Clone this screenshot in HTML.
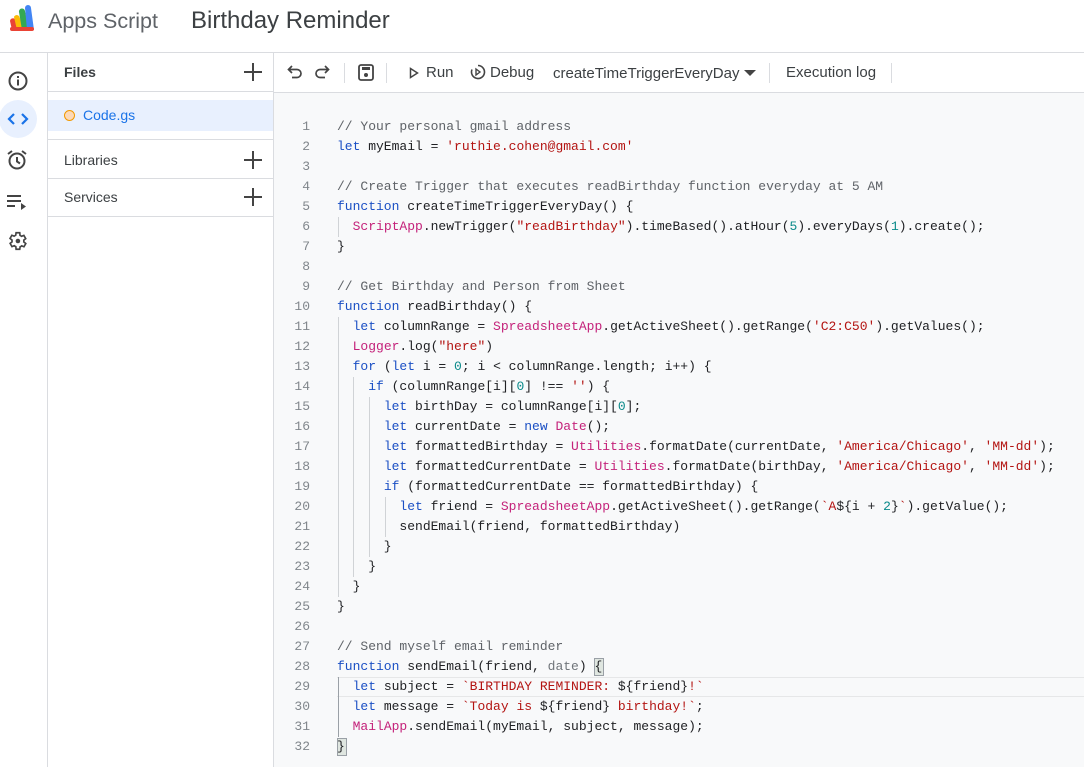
<!DOCTYPE html>
<html><head><meta charset="utf-8"><style>
*{margin:0;padding:0;box-sizing:border-box}
body{width:1084px;height:767px;overflow:hidden;background:#fff;font-family:"Liberation Sans",Arial,sans-serif;color:#202124;position:relative}
.a{position:absolute}
.hdr{left:0;top:0;width:1084px;height:53px;border-bottom:1px solid #dadce0}
.rail{left:0;top:53px;width:48px;height:714px;border-right:1px solid #dadce0}
.files{left:48px;top:53px;width:226px;height:714px;border-right:1px solid #dadce0}
.row{position:absolute;left:0;width:225px;font-size:14px;color:#3c4043;padding-left:16px}
.plus{position:absolute;right:11px;width:18px;height:18px}
.plus:before,.plus:after{content:"";position:absolute;background:#444}
.plus:before{left:0;top:8px;width:18px;height:2px}
.plus:after{left:8px;top:0;width:2px;height:18px}
.tb{left:274px;top:53px;width:810px;height:40px;border-bottom:1px solid #dadce0;font-size:15px;color:#3c4043}
.ed{left:274px;top:93px;width:810px;height:674px;background:#f8f9fa}
.code{left:337px;top:117px;font-family:"Liberation Mono",monospace;font-size:13px;line-height:20px;white-space:pre;color:#202124}
.ln{left:290px;top:117px;width:20px;text-align:right;font-family:"Liberation Mono",monospace;font-size:13px;line-height:20px;color:#80868b;white-space:pre}
.c{color:#5f6368}.k{color:#1a4fc4}.s{color:#b31412}.p{color:#c4227a}.n{color:#0b8a8a}.g{color:#70757a}
.gd{position:absolute;width:1px;background:#d0d3d6}
</style></head><body>
<div class="a hdr">
<svg class="a" style="left:9px;top:5px" width="34" height="28" viewBox="0 0 34 28">
<path d="M3 25 L1 16 a3 3 0 0 1 5-2 l6 11z" fill="#ea4335"/>
<path d="M8 25 L5 12 a3 3 0 0 1 5-1 l6 14z" fill="#fbbc04"/>
<path d="M13 25 L10 7 a3 3 0 0 1 6-1 l4 19z" fill="#34a853"/>
<path d="M18 25 L16 3 a3 3 0 0 1 6 0 l3 22z" fill="#4285f4"/>
<rect x="1" y="22" width="24" height="4" rx="2" fill="#ea4335"/>
</svg>
<div class="a" style="left:48px;top:9px;font-size:21.5px;color:#5f6368">Apps Script</div>
<div class="a" style="left:191px;top:7px;font-size:24px;color:#3c4043">Birthday Reminder</div>
</div>
<div class="a rail">
<svg class="a" style="left:7px;top:17px" width="22" height="22" viewBox="0 0 22 22"><circle cx="11" cy="11" r="8.5" fill="none" stroke="#444" stroke-width="2"/><rect x="10" y="9.5" width="2" height="6" fill="#444"/><rect x="10" y="6" width="2" height="2" fill="#444"/></svg>
<div class="a" style="left:-1px;top:47px;width:38px;height:38px;border-radius:50%;background:#e8f0fe"></div>
<svg class="a" style="left:7px;top:57px" width="22" height="18" viewBox="0 0 22 18"><path d="M7 4 L2 9 L7 14 M15 4 L20 9 L15 14" fill="none" stroke="#1a73e8" stroke-width="2.2"/></svg>
<svg class="a" style="left:6px;top:96px" width="22" height="22" viewBox="0 0 22 22"><circle cx="11" cy="12" r="7.5" fill="none" stroke="#444" stroke-width="2"/><path d="M11 8v4.5l3 2M2 5l4-3M20 5l-4-3" fill="none" stroke="#444" stroke-width="2"/></svg>
<svg class="a" style="left:7px;top:141px" width="22" height="16" viewBox="0 0 22 16"><path d="M0 2h14M0 7h14M0 12h8" stroke="#444" stroke-width="2"/><path d="M14 9l5 3.5-5 3.5z" fill="#444"/></svg>
<svg class="a" style="left:6px;top:177px" width="22" height="22" viewBox="0 0 24 24"><path d="M19.4 13a7.5 7.5 0 0 0 0-2l2.1-1.6-2-3.5-2.5 1a7 7 0 0 0-1.7-1L15 3h-4l-.4 2.7a7 7 0 0 0-1.7 1l-2.5-1-2 3.5L6.6 11a7.5 7.5 0 0 0 0 2l-2.1 1.6 2 3.5 2.5-1a7 7 0 0 0 1.7 1L11 21h4l.4-2.7a7 7 0 0 0 1.7-1l2.5 1 2-3.5z" fill="none" stroke="#444" stroke-width="1.8"/><circle cx="13" cy="12" r="2.5" fill="#444"/></svg>
</div>
<div class="a files">
<div class="row" style="top:0;height:39px;line-height:39px;border-bottom:1px solid #dadce0;font-weight:bold;color:#3c4043">Files<span class="plus" style="top:10px"></span></div>
<div class="row" style="top:47px;height:31px;line-height:31px;background:#e8f0fe;color:#1a73e8"><span style="display:inline-block;width:11px;height:11px;border:1.5px solid #f29900;background:#fcd9b8;border-radius:50%;margin-right:8px;vertical-align:-1px"></span>Code.gs</div>
<div class="row" style="top:86px;height:40px;line-height:40px;border-top:1px solid #dadce0;border-bottom:1px solid #dadce0">Libraries<span class="plus" style="top:11px"></span></div>
<div class="row" style="top:125px;height:39px;line-height:39px;border-bottom:1px solid #dadce0">Services<span class="plus" style="top:10px"></span></div>
</div>
<div class="a tb">
<svg class="a" style="left:13px;top:12px" width="16" height="14" viewBox="0 0 16 14"><path d="M5 1L1.5 4.5L5 8M2 4.5h8a4 4 0 0 1 0 8H5" fill="none" stroke="#444" stroke-width="1.7"/></svg>
<svg class="a" style="left:40px;top:12px" width="16" height="14" viewBox="0 0 16 14"><path d="M11 1l3.5 3.5L11 8M14 4.5H6a4 4 0 0 0 0 8h5" fill="none" stroke="#444" stroke-width="1.7"/></svg>
<div class="a" style="left:70px;top:10px;width:1px;height:20px;background:#dadce0"></div>
<svg class="a" style="left:84px;top:11px" width="16" height="17" viewBox="0 0 16 17"><rect x="1" y="1" width="14" height="15" rx="2" fill="none" stroke="#444" stroke-width="1.8"/><rect x="4" y="3" width="8" height="3" fill="#444"/><circle cx="8" cy="11" r="2" fill="#444"/></svg>
<div class="a" style="left:112px;top:10px;width:1px;height:20px;background:#dadce0"></div>
<svg class="a" style="left:135px;top:14px" width="10" height="12" viewBox="0 0 10 12"><path d="M1.5 1.5 L8.5 6 L1.5 10.5z" fill="none" stroke="#444" stroke-width="1.5"/></svg>
<div class="a" style="left:152px;top:11px">Run</div>
<svg class="a" style="left:196px;top:11px" width="16" height="16" viewBox="0 0 16 16"><path d="M8 1.5a6.5 6.5 0 1 1-6 4" fill="none" stroke="#444" stroke-width="1.6"/><path d="M6 5l4 3-4 3z" fill="none" stroke="#444" stroke-width="1.4"/></svg>
<div class="a" style="left:216px;top:11px">Debug</div>
<div class="a" style="left:279px;top:12px;font-size:15px">createTimeTriggerEveryDay</div>
<div class="a" style="left:470px;top:17px;width:0;height:0;border-left:6px solid transparent;border-right:6px solid transparent;border-top:6px solid #444"></div>
<div class="a" style="left:495px;top:10px;width:1px;height:20px;background:#dadce0"></div>
<div class="a" style="left:512px;top:11px">Execution log</div>
<div class="a" style="left:617px;top:10px;width:1px;height:20px;background:#dadce0"></div>
</div>
<div class="a ed"></div>
<div class="a" style="left:337px;top:677px;width:747px;height:20px;border-top:1px solid #e6e7e8;border-bottom:1px solid #e6e7e8"></div>
<div class="gd" style="left:338px;top:217px;height:20px"></div>
<div class="gd" style="left:338px;top:317px;height:280px"></div>
<div class="gd" style="left:353px;top:377px;height:200px"></div>
<div class="gd" style="left:369px;top:397px;height:160px"></div>
<div class="gd" style="left:385px;top:497px;height:40px"></div>
<div class="gd" style="left:338px;top:677px;height:60px;background:#9aa0a6"></div>
<div class="a" style="left:594px;top:658px;width:10px;height:18px;border:1px solid #9aa0a6;background:#dfe6e0"></div>
<div class="a" style="left:337px;top:738px;width:10px;height:18px;border:1px solid #9aa0a6;background:#dfe6e0"></div>
<div class="a ln">1
2
3
4
5
6
7
8
9
10
11
12
13
14
15
16
17
18
19
20
21
22
23
24
25
26
27
28
29
30
31
32</div>
<div class="a code"><span class="c">// Your personal gmail address</span>
<span class="k">let</span> myEmail = <span class="s">'ruthie.cohen@gmail.com'</span>

<span class="c">// Create Trigger that executes readBirthday function everyday at 5 AM</span>
<span class="k">function</span> createTimeTriggerEveryDay() {
  <span class="p">ScriptApp</span>.newTrigger(<span class="s">"readBirthday"</span>).timeBased().atHour(<span class="n">5</span>).everyDays(<span class="n">1</span>).create();
}

<span class="c">// Get Birthday and Person from Sheet</span>
<span class="k">function</span> readBirthday() {
  <span class="k">let</span> columnRange = <span class="p">SpreadsheetApp</span>.getActiveSheet().getRange(<span class="s">'C2:C50'</span>).getValues();
  <span class="p">Logger</span>.log(<span class="s">"here"</span>)
  <span class="k">for</span> (<span class="k">let</span> i = <span class="n">0</span>; i &lt; columnRange.length; i++) {
    <span class="k">if</span> (columnRange[i][<span class="n">0</span>] !== <span class="s">''</span>) {
      <span class="k">let</span> birthDay = columnRange[i][<span class="n">0</span>];
      <span class="k">let</span> currentDate = <span class="k">new</span> <span class="p">Date</span>();
      <span class="k">let</span> formattedBirthday = <span class="p">Utilities</span>.formatDate(currentDate, <span class="s">'America/Chicago'</span>, <span class="s">'MM-dd'</span>);
      <span class="k">let</span> formattedCurrentDate = <span class="p">Utilities</span>.formatDate(birthDay, <span class="s">'America/Chicago'</span>, <span class="s">'MM-dd'</span>);
      <span class="k">if</span> (formattedCurrentDate == formattedBirthday) {
        <span class="k">let</span> friend = <span class="p">SpreadsheetApp</span>.getActiveSheet().getRange(<span class="s">`A</span>${i + <span class="n">2</span>}<span class="s">`</span>).getValue();
        sendEmail(friend, formattedBirthday)
      }
    }
  }
}

<span class="c">// Send myself email reminder</span>
<span class="k">function</span> sendEmail(friend, <span class="g">date</span>) {
  <span class="k">let</span> subject = <span class="s">`BIRTHDAY REMINDER: </span>${friend}<span class="s">!`</span>
  <span class="k">let</span> message = <span class="s">`Today is </span>${friend}<span class="s"> birthday!`</span>;
  <span class="p">MailApp</span>.sendEmail(myEmail, subject, message);
}</div>
</body></html>
